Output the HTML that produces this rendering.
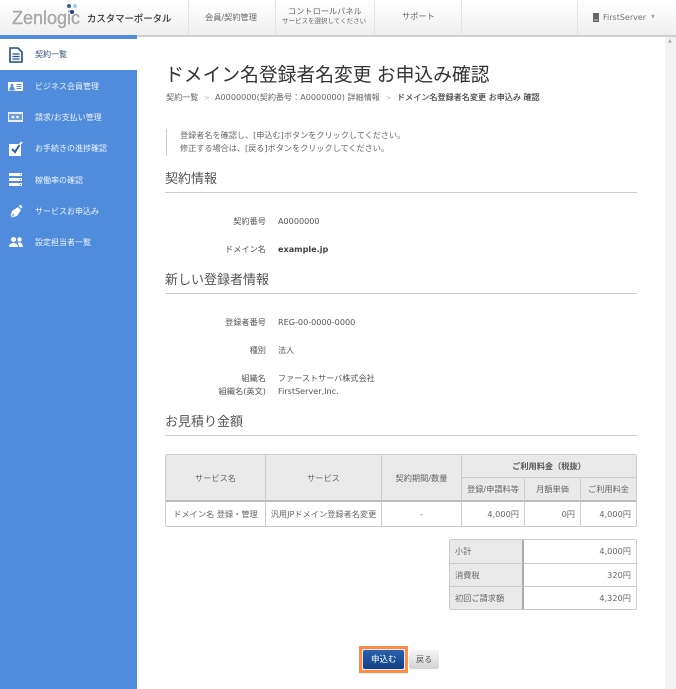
<!DOCTYPE html>
<html lang="ja"><head><meta charset="utf-8"><style>
html,body{margin:0;padding:0}
body{width:676px;height:689px;overflow:hidden;position:relative;background:#fff;font-family:"DejaVu Sans","Noto Sans CJK JP",sans-serif;font-size:8.1px;color:#555}
.a{position:absolute;white-space:nowrap;line-height:1.2}
.b{position:absolute}
.nav{left:35px;color:#eef4fc;font-size:8px}
.h2{left:165px;font-size:13px;color:#555;font-family:"Liberation Sans","Noto Sans CJK JP",sans-serif}
.hr{position:absolute;left:165px;width:472px;height:1px;background:#ccc}
.l{right:410px;text-align:right;font-size:8.2px}
.v{left:278px}
.sep{position:absolute;top:0;width:1px;height:35px;background:#e4e4e4}
table{position:absolute;table-layout:fixed;border-collapse:separate;border-spacing:0;font-size:8.2px;color:#666;background:#fff;border:1px solid #ccc;border-radius:2px}
td,th{padding:0;font-weight:normal;text-align:center;border-right:1px solid #ccc;border-bottom:1px solid #ccc;box-sizing:border-box;white-space:nowrap}
tr>*:last-child{border-right:0}
th{background:#e9e9e9}
.r{text-align:right;padding-right:5px}
svg{position:absolute}
</style></head><body>
<div class="b" style="left:0;top:0;width:676px;height:35px;background:linear-gradient(#fff,#efefef);border-bottom:2px solid #cfcfcf"></div>
<div class="a" style="left:12px;top:8px;font:18px 'Liberation Sans',sans-serif;color:#a9a9a9;-webkit-text-stroke:.4px #a9a9a9">Zenlogic</div>
<div class="b" style="left:67px;top:4px;width:4px;height:4px;border-radius:50%;background:#2c62a8"></div>
<div class="b" style="left:73px;top:4px;width:4px;height:4px;border-radius:50%;background:#a9c5ea"></div>
<div class="b" style="left:70px;top:10px;width:4px;height:4px;border-radius:50%;background:#1c3f75"></div>
<div class="a" style="left:87px;top:14px;font-size:9.4px;color:#333;-webkit-text-stroke:.2px #333">カスタマーポータル</div>
<div class="sep" style="left:188px"></div><div class="sep" style="left:275px"></div><div class="sep" style="left:374px"></div><div class="sep" style="left:461px"></div><div class="sep" style="left:577px"></div>
<div class="a" style="left:205px;top:13px;color:#666;font-size:8.2px">会員/契約管理</div>
<div class="a" style="left:288px;top:7px;color:#666;font-size:8.2px">コントロールパネル</div>
<div class="a" style="left:282px;top:18px;color:#666;font-size:6.5px">サービスを選択してください</div>
<div class="a" style="left:402px;top:12px;color:#666;font-size:8.2px">サポート</div>
<svg style="left:593px;top:13px" width="6" height="9" viewBox="0 0 6 9"><path d="M0 0h6v9H0z" fill="#666"/><path d="M1 7h4" stroke="#ccc"/></svg>
<div class="a" style="left:603px;top:13px;color:#777;font-size:8px">FirstServer</div>
<div class="a" style="left:651px;top:14px;color:#aaa;font-size:5px">▼</div>

<div class="b" style="left:0;top:35px;width:137px;height:654px;background:#518cdc"></div>
<div class="b" style="left:0;top:39px;width:137px;height:31px;background:#fff"></div>
<svg style="left:9px;top:47px" width="14" height="16" viewBox="0 0 14 16"><path d="M1 1h8l4 4v10H1z" fill="#fff" stroke="#1c4f8c" stroke-width="1.6"/><path d="M3.500 7h7M3.500 9.500h7M3.500 12h7" stroke="#1c4f8c" stroke-width="1.200"/></svg>
<div class="a nav" style="top:50px;color:#2f4f7a">契約一覧</div>
<div class="a nav" style="top:82px">ビジネス会員管理</div>
<div class="a nav" style="top:113px">請求/お支払い管理</div>
<div class="a nav" style="top:144px">お手続きの進捗確認</div>
<div class="a nav" style="top:176px">稼働率の確認</div>
<div class="a nav" style="top:207px">サービスお申込み</div>
<div class="a nav" style="top:238px">設定担当者一覧</div>
<svg style="left:8px;top:82px" width="15" height="9" viewBox="0 0 15 9"><rect width="15" height="9" fill="#fff"/><circle cx="4" cy="3.500" r="1.500" fill="#518cdc"/><path d="M1.500 8h5L5.500 5.500h-3zM8.500 2.500h5M8.500 4.500h5M8.500 6.500h5" stroke="#518cdc" stroke-width=".9" fill="#518cdc"/></svg>
<svg style="left:8px;top:112px" width="15" height="10" viewBox="0 0 15 10"><rect width="15" height="10" fill="#e8eef8"/><rect x="1" y="2" width="13" height="6" fill="#6e9de0"/><circle cx="5" cy="5" r="1.300" fill="#fff"/><circle cx="9.500" cy="5" r="1.300" fill="#fff"/></svg>
<svg style="left:9px;top:141px" width="14" height="15" viewBox="0 0 14 15"><rect y="3" width="12" height="12" fill="#fff"/><path d="M3 8l3 3 4.500-7" fill="none" stroke="#2a5fa8" stroke-width="2"/><path d="M10.500 4L13 1" stroke="#fff" stroke-width="2"/></svg>
<svg style="left:9px;top:173px" width="13" height="13" viewBox="0 0 13 13"><path d="M0 0h13v3H0zM0 5h13v3H0zM0 10h13v3H0z" fill="#fff"/><path d="M11 1.500h1M11 6.500h1M11 11.500h1" stroke="#518cdc"/></svg>
<svg style="left:9px;top:204px" width="14" height="15" viewBox="0 0 14 15"><path d="M1 14l2-7 6-4 3 3-4 6z" fill="#fff"/><path d="M10 2l1.500-1.500L13.500 3 12 4.500z" fill="#fff"/><path d="M1 14l4-4" stroke="#518cdc"/></svg>
<svg style="left:9px;top:237px" width="14" height="10" viewBox="0 0 14 10"><circle cx="4.500" cy="2.500" r="2.500" fill="#fff"/><circle cx="10.500" cy="2.500" r="2.200" fill="#fff"/><path d="M0 10q0-4 4.500-4T9 10zM10 10q0-3-1.500-4.500 5-1 5.500 4.500z" fill="#fff"/></svg>

<div class="b" style="left:665px;top:37px;width:11px;height:652px;background:#f3f3f3"></div>
<div class="a" style="left:668px;top:38px;color:#aaa;font-size:5px">▲</div>

<div class="a" style="left:165px;top:60px;font:18.8px 'Liberation Sans','Noto Sans CJK JP',sans-serif;color:#333">ドメイン名登録者名変更 お申込み確認</div>
<div class="a" style="left:166px;top:93px;color:#666">契約一覧</div>
<div class="a" style="left:204px;top:94px;font-size:7px;color:#bbb">&gt;</div>
<div class="a" style="left:215px;top:93px;color:#666">A0000000(契約番号：A0000000) 詳細情報</div>
<div class="a" style="left:386px;top:94px;font-size:7px;color:#bbb">&gt;</div>
<div class="a" style="left:397px;top:93px;color:#444;-webkit-text-stroke:.15px #444">ドメイン名登録者名変更 お申込み 確認</div>

<div class="b" style="left:166px;top:129px;width:1px;height:27px;background:#ccc"></div>
<div class="a" style="left:180px;top:131px;color:#666;font-size:8.15px">登録者名を確認し、[申込む]ボタンをクリックしてください。</div>
<div class="a" style="left:180px;top:144px;color:#666;font-size:8.15px">修正する場合は、[戻る]ボタンをクリックしてください。</div>

<div class="a h2" style="top:171px">契約情報</div><div class="hr" style="top:192px"></div>
<div class="a l" style="top:217px">契約番号</div><div class="a v" style="top:217px">A0000000</div>
<div class="a l" style="top:245px">ドメイン名</div><div class="a v" style="top:245px;font-weight:bold;color:#444">example.jp</div>

<div class="a h2" style="top:272px">新しい登録者情報</div><div class="hr" style="top:293px"></div>
<div class="a l" style="top:318px">登録者番号</div><div class="a v" style="top:318px">REG-00-0000-0000</div>
<div class="a l" style="top:346px">種別</div><div class="a v" style="top:346px">法人</div>
<div class="a l" style="top:374px">組織名</div><div class="a v" style="top:374px">ファーストサーバ株式会社</div>
<div class="a l" style="top:387px">組織名(英文)</div><div class="a v" style="top:387px">FirstServer,Inc.</div>

<div class="a h2" style="top:414px">お見積り金額</div><div class="hr" style="top:435px"></div>

<table style="left:165px;top:454px;width:472px;height:73px">
<colgroup><col style="width:100px"><col style="width:116px"><col style="width:80px"><col style="width:63px"><col style="width:56px"><col></colgroup>
<tr style="height:23px"><th rowspan="2" style="border-bottom:2px solid #bbb">サービス名</th><th rowspan="2" style="border-bottom:2px solid #bbb">サービス</th><th rowspan="2" style="border-bottom:2px solid #bbb">契約期間/数量</th><th colspan="3" style="font-weight:bold;color:#555">ご利用料金（税抜）</th></tr>
<tr style="height:24px"><th style="border-bottom:2px solid #bbb">登録/申請料等</th><th style="border-bottom:2px solid #bbb">月額単価</th><th style="border-bottom:2px solid #bbb">ご利用料金</th></tr>
<tr><td style="border-bottom:0">ドメイン名 登録・管理</td><td style="border-bottom:0">汎用JPドメイン登録者名変更</td><td style="border-bottom:0">-</td><td class="r" style="border-bottom:0">4,000円</td><td class="r" style="border-bottom:0">0円</td><td class="r" style="border-bottom:0">4,000円</td></tr>
</table>

<table style="left:449px;top:539px;width:188px;height:71px">
<colgroup><col style="width:74px"><col></colgroup>
<tr><th style="text-align:left;padding-left:5px;border-right:2px solid #aaa">小計</th><td class="r">4,000円</td></tr>
<tr><th style="text-align:left;padding-left:5px;border-right:2px solid #aaa">消費税</th><td class="r">320円</td></tr>
<tr><th style="text-align:left;padding-left:5px;border-right:2px solid #aaa;border-bottom:0">初回ご請求額</th><td class="r" style="border-bottom:0">4,320円</td></tr>
</table>

<div class="b" style="left:359px;top:646px;width:49px;height:27px;background:#ff8c42"></div>
<div class="b" style="left:362px;top:649px;width:43px;height:21px;background:#dfe8f5"></div>
<div class="b" style="left:363px;top:650px;width:41px;height:19px;background:linear-gradient(#2a62ad,#123f83);border-radius:2px"></div>
<div class="a" style="left:371px;top:655px;color:#fff;font-size:8.5px">申込む</div>
<div class="b" style="left:409px;top:650px;width:30px;height:19px;background:linear-gradient(#f6f6f6,#d2d2d2);border-radius:2px"></div>
<div class="a" style="left:416px;top:655px;color:#555">戻る</div>
</body></html>
